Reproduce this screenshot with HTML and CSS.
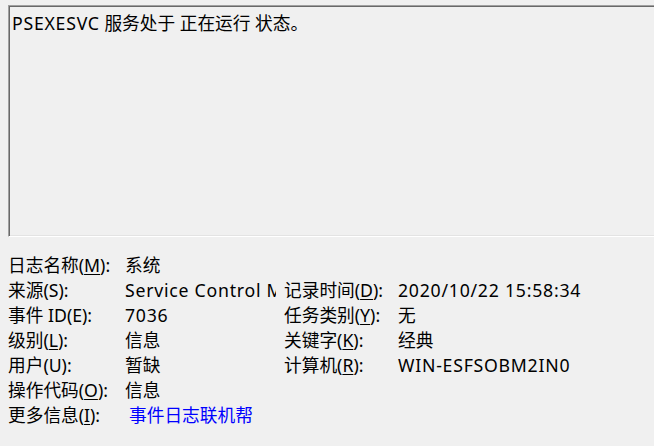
FILE: index.html
```html
<!DOCTYPE html>
<html>
<head>
<meta charset="utf-8">
<link rel="stylesheet" href="styles.css">
</head>
<body>
<div class="page">
  <div class="desc"><span class="lat">PSEXESVC</span> 服务处于 正在运行 状态。</div>
  <div class="grid">
    <div class="lbl">日志名称(<u>M</u>):</div><div class="val">系统</div><div></div><div></div>
    <div class="lbl">来源(S):</div><div class="val clip lat">Service Control Manager</div><div class="lbl">记录时间(<u>D</u>):</div><div class="val lat">2020/10/22 15:58:34</div>
    <div class="lbl">事件 ID(E):</div><div class="val lat">7036</div><div class="lbl">任务类别(<u>Y</u>):</div><div class="val">无</div>
    <div class="lbl">级别(<u>L</u>):</div><div class="val">信息</div><div class="lbl">关键字(<u>K</u>):</div><div class="val">经典</div>
    <div class="lbl">用户(U):</div><div class="val">暂缺</div><div class="lbl">计算机(<u>R</u>):</div><div class="val lat">WIN-ESFSOBM2IN0</div>
    <div class="lbl">操作代码(<u>O</u>):</div><div class="val">信息</div><div></div><div></div>
    <div class="lbl">更多信息(<u>I</u>):</div><div class="val"><a class="link" href="#">事件日志联机帮</a></div><div></div><div></div>
  </div>
</div>
</body>
</html>
```
FILE: styles.css
```css
html, body {
  margin: 0;
  padding: 0;
  background: #f0f0f0;
  overflow: hidden;
}
body {
  font-family: "Noto Sans", "Noto Sans CJK SC", sans-serif;
  font-size: 17.7px;
  color: #000;
}
.page {
  width: 654px;
  height: 446px;
  padding-top: 5px;
  box-sizing: border-box;
  overflow: hidden;
}
.desc {
  margin-left: 8px;
  width: 700px;
  height: 232px;
  box-sizing: border-box;
  border-top: 1px solid #a0a0a0;
  border-left: 1px solid #a0a0a0;
  border-bottom: 1px solid #ffffff;
  box-shadow: inset 1px 1px 0 #696969, inset 0 -1px 0 #e3e3e3;
  padding: 6px 0 0 3px;
  line-height: 22px;
}
.grid {
  display: grid;
  grid-template-columns: 117px 151px 122px auto;
  grid-auto-rows: 25px;
  margin: 16px 0 0 8px;
  line-height: 25px;
}
.lbl, .val {
  white-space: nowrap;
}
.lat {
  letter-spacing: 0.75px;
}
.clip {
  overflow: hidden;
}
.lbl:nth-child(4n+3) {
  padding-left: 8px;
}
.link {
  color: #0000ff;
  text-decoration: none;
  margin-left: 4px;
}
u {
  text-underline-offset: 2px;
}
```
